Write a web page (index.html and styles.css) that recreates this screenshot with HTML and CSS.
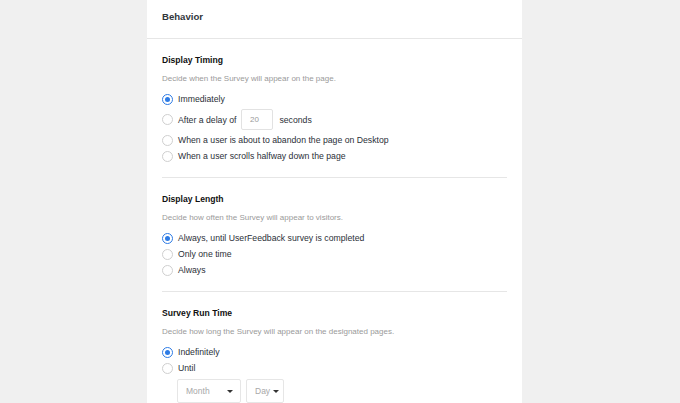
FILE: index.html
```html
<!DOCTYPE html>
<html lang="en">
<head>
  <meta charset="UTF-8" />
  <title>Survey Settings</title>
  <link rel="stylesheet" href="styles.css">
</head>
<body>

  <div class="card">
    <div class="card-header">Behavior</div>

    <div class="card-body">
      <!-- Display timing -->
      <section class="field">
        <h3>Display Timing</h3>
        <p class="desc">Decide when the Survey will appear on the page.</p>
        <label class="option"><span class="radio checked"></span>Immediately</label>
        <label class="option option-delay">
          <span class="radio"></span>After a delay of
          <span class="num-input">20</span>
          seconds
        </label>
        <label class="option"><span class="radio"></span>When a user is about to abandon the page on Desktop</label>
        <label class="option"><span class="radio"></span>When a user scrolls halfway down the page</label>
      </section>

      <!-- Display length -->
      <section class="field">
        <h3>Display Length</h3>
        <p class="desc">Decide how often the Survey will appear to visitors.</p>
        <label class="option"><span class="radio checked"></span>Always, until UserFeedback survey is completed</label>
        <label class="option"><span class="radio"></span>Only one time</label>
        <label class="option"><span class="radio"></span>Always</label>
      </section>

      <!-- Run time -->
      <section class="field">
        <h3>Survey Run Time</h3>
        <p class="desc">Decide how long the Survey will appear on the designated pages.</p>
        <label class="option"><span class="radio checked"></span>Indefinitely</label>
        <label class="option"><span class="radio"></span>Until</label>
        <div class="date-row">
          <div class="select select-month">Month <span class="caret"></span></div>
          <div class="select select-day">Day <span class="caret"></span></div>
        </div>
      </section>
    </div>
  </div>

</body>
</html>
```

FILE: styles.css
```css
body {
  margin: 0;
  background: #f0f0f0;
  font-family: 'Liberation Sans', Arial, sans-serif;
  color: #2b3038;
  height: 403px;
  overflow: hidden;
}

.card {
  width: 375px;
  margin-left: 147px;
  background: #fff;
  min-height: 403px;
}

.card-header {
  height: 38px;
  line-height: 34px;
  padding: 0 15px;
  font-size: 9.6px;
  font-weight: bold;
  color: #32373c;
  border-bottom: 1px solid #e6e6e6;
}

.card-body {
  padding: 0 15px;
}

.field {
  padding: 14px 0 13px;
  border-bottom: 1px solid #e6e6e6;
}

.field:last-child {
  border-bottom: none;
}

h3 {
  margin: 0;
  font-size: 8.6px;
  line-height: 14px;
  color: #111;
}

.desc {
  margin: 5px 0 5px;
  font-size: 8px;
  line-height: 14px;
  color: #9a9a9a;
}

.option {
  display: flex;
  align-items: center;
  height: 16px;
  font-size: 8.7px;
  color: #2b3038;
}

.option-delay {
  height: 25px;
}

.radio {
  width: 9px;
  height: 9px;
  border: 1px solid #cfcfcf;
  border-radius: 50%;
  margin-right: 5px;
  box-sizing: content-box;
  position: relative;
  flex-shrink: 0;
}

.radio.checked {
  border-color: #2d7be5;
}

.radio.checked::after {
  content: '';
  position: absolute;
  left: 2px;
  top: 2px;
  width: 5px;
  height: 5px;
  border-radius: 50%;
  background: #2d7be5;
}

.num-input {
  display: inline-block;
  width: 30px;
  height: 19px;
  line-height: 19px;
  border: 1px solid #e2e2e2;
  border-radius: 2px;
  margin: 0 6px 0 5px;
  text-align: center;
  font-size: 8px;
  color: #9a9a9a;
  box-sizing: content-box;
  text-indent: -6px;
}

.date-row {
  display: flex;
  gap: 5px;
  margin: 3px 0 0 15px;
}

.select {
  display: flex;
  align-items: center;
  justify-content: space-between;
  height: 22px;
  border: 1px solid #e6e6e6;
  border-radius: 2px;
  padding: 0 7px 0 8px;
  font-size: 8.5px;
  color: #a8a8a8;
}

.select-month {
  width: 47px;
}

.select-day {
  width: 22px;
  padding: 0 6px 0 8px;
  gap: 3px;
}

.caret {
  width: 0;
  height: 0;
  border-left: 3px solid transparent;
  border-right: 3px solid transparent;
  border-top: 3px solid #333;
}
```
